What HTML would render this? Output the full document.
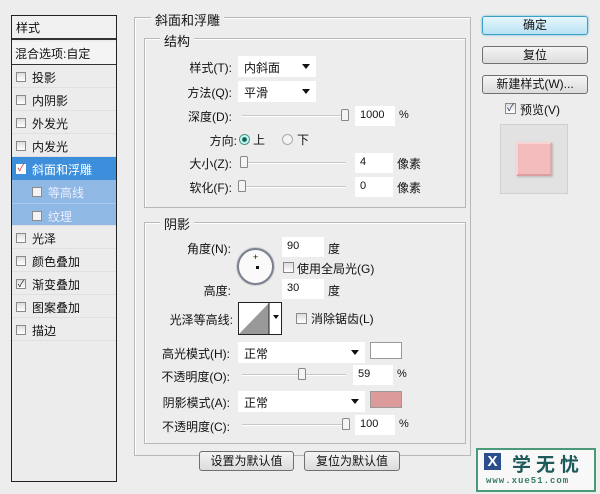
<!DOCTYPE html>
<html><head><meta charset="utf-8"><style>
*{box-sizing:border-box;margin:0;padding:0}
body{width:600px;height:494px;background:#ededed;font-family:"Liberation Sans","Noto Sans CJK SC",sans-serif;font-size:12px;color:#111;position:relative;overflow:hidden}
.a{position:absolute;white-space:nowrap}
.cb{position:absolute;width:10px;height:10px;border:1px solid #8a8a8a;background:linear-gradient(#ddd,#fff)}
.row{position:absolute;left:12px;width:104px;height:23px;border-bottom:1px solid #e0e0e0}
.row span{position:absolute;left:20px;top:4px}
.row .cb{left:4px;top:7px}
.gb{position:absolute;border:1px solid #b8b8b8;box-shadow:1px 1px 0 #fff inset}
.gt{position:absolute;background:#ededed;padding:0 4px}
.lab{position:absolute;text-align:right;white-space:nowrap}
.inp{position:absolute;background:#fff;height:20px;padding:3px 0 0 5px;font-size:11px}
.dd{position:absolute;background:#fff;height:21px;padding:3px 0 0 6px}
.dd:after{content:"";position:absolute;right:6px;top:8px;border:4px solid transparent;border-top:5px solid #111}
.sl{position:absolute;height:2px;background:#c8c8c8;border-bottom:1px solid #fff}
.th{position:absolute;width:8px;height:12px;border:1px solid #888;border-radius:2px 2px 1px 1px;background:#f4f4f4}
.btn{position:absolute;border:1px solid #707070;border-radius:3px;background:linear-gradient(#f4f4f4,#dcdcdc);text-align:center;font-size:12px;line-height:16px}
</style></head><body>
<!-- left list -->
<div class="a" style="left:11px;top:15px;width:106px;height:467px;border:1px solid #222;background:#ececec"></div>
<div class="a" style="left:12px;top:16px;width:104px;height:24px;background:#f0f0f0;border-bottom:2px solid #333;padding:3px 4px">样式</div>
<div class="a" style="left:12px;top:42px;width:104px;height:23px;background:#f4f4f4;border-bottom:1px solid #333;padding:3px 3px">混合选项:自定</div>
<div class="row" style="top:65px"><div class="cb"></div><span>投影</span></div>
<div class="row" style="top:88px"><div class="cb"></div><span>内阴影</span></div>
<div class="row" style="top:111px"><div class="cb"></div><span>外发光</span></div>
<div class="row" style="top:134px"><div class="cb"></div><span>内发光</span></div>
<div class="row" style="top:157px;background:#3d8fdc;color:#fff;border:none"><div class="cb" style="border-color:#fff;background:#fff;color:#c33;font-size:10px;line-height:8px;text-align:center">✓</div><span>斜面和浮雕</span></div>
<div class="row" style="top:180px;background:#8fb8e4;color:#eef;border:none"><div class="cb" style="left:20px;background:#f4f4f4"></div><span style="left:36px">等高线</span></div>
<div class="row" style="top:203px;background:#8fb8e4;color:#eef;border-top:1px solid #aac8ec"><div class="cb" style="left:20px;background:#f4f4f4"></div><span style="left:36px">纹理</span></div>
<div class="row" style="top:226px"><div class="cb"></div><span>光泽</span></div>
<div class="row" style="top:249px"><div class="cb"></div><span>颜色叠加</span></div>
<div class="row" style="top:272px"><div class="cb" style="font-size:9px;line-height:8px;text-align:center">✓</div><span>渐变叠加</span></div>
<div class="row" style="top:295px"><div class="cb"></div><span>图案叠加</span></div>
<div class="row" style="top:318px"><div class="cb"></div><span>描边</span></div>

<!-- main group -->
<div class="gb" style="left:134px;top:17px;width:337px;height:439px"></div>
<div class="gt" style="left:151px;top:10px;font-size:13px">斜面和浮雕</div>
<div class="gb" style="left:144px;top:38px;width:322px;height:170px"></div>
<div class="gt" style="left:160px;top:31px;font-size:13px">结构</div>
<div class="lab" style="right:368px;top:59px">样式(T):</div>
<div class="dd" style="left:238px;top:56px;width:78px">内斜面</div>
<div class="lab" style="right:368px;top:84px">方法(Q):</div>
<div class="dd" style="left:238px;top:81px;width:78px">平滑</div>
<div class="lab" style="right:368px;top:108px">深度(D):</div>
<div class="sl" style="left:242px;top:115px;width:104px"></div><div class="th" style="left:341px;top:109px"></div>
<div class="inp" style="left:355px;top:106px;width:40px">1000</div><div class="a" style="left:399px;top:109px;font-size:11px">%</div>
<div class="lab" style="right:363px;top:132px">方向:</div>
<div class="a" style="left:239px;top:134px;width:11px;height:11px;border-radius:50%;border:1px solid #5a8a8a;background:radial-gradient(#1d5a5a 30%,#bfe 45%)"></div>
<div class="a" style="left:253px;top:131px">上</div>
<div class="a" style="left:282px;top:134px;width:11px;height:11px;border-radius:50%;border:1px solid #aaa;background:#f4f4f4"></div>
<div class="a" style="left:297px;top:131px">下</div>
<div class="lab" style="right:368px;top:155px">大小(Z):</div>
<div class="sl" style="left:242px;top:162px;width:104px"></div><div class="th" style="left:240px;top:156px"></div>
<div class="inp" style="left:355px;top:153px;width:38px">4</div><div class="a" style="left:397px;top:155px">像素</div>
<div class="lab" style="right:368px;top:179px">软化(F):</div>
<div class="sl" style="left:242px;top:186px;width:104px"></div><div class="th" style="left:238px;top:180px"></div>
<div class="inp" style="left:355px;top:177px;width:38px">0</div><div class="a" style="left:397px;top:179px">像素</div>

<div class="gb" style="left:144px;top:222px;width:322px;height:222px"></div>
<div class="gt" style="left:160px;top:214px;font-size:13px">阴影</div>
<div class="lab" style="right:369px;top:240px">角度(N):</div>
<div class="inp" style="left:282px;top:237px;width:42px">90</div><div class="a" style="left:328px;top:240px">度</div>
<div class="a" style="left:237px;top:248px;width:37px;height:37px;border-radius:50%;border:2px solid #7a8090;background:#fafafa;box-shadow:0 0 0 1px #ccc"></div>
<div class="a" style="left:253px;top:252px;font-size:9px">+</div>
<div class="a" style="left:256px;top:266px;width:3px;height:3px;background:#111"></div>
<div class="cb" style="left:283px;top:262px;width:11px;height:11px"></div><div class="a" style="left:297px;top:260px">使用全局光(G)</div>
<div class="lab" style="right:369px;top:282px">高度:</div>
<div class="inp" style="left:282px;top:279px;width:42px">30</div><div class="a" style="left:328px;top:282px">度</div>
<div class="lab" style="right:367px;top:311px">光泽等高线:</div>
<div class="a" style="left:238px;top:302px;width:44px;height:33px;border:1px solid #222;background:#fff">
<svg width="42" height="31" style="position:absolute;left:0;top:0"><polygon points="0,31 30,0 30,31" fill="#999"/><line x1="30" y1="0" x2="30" y2="31" stroke="#222"/></svg>
<div class="a" style="left:34px;top:12px;border:3px solid transparent;border-top:4px solid #111"></div></div>
<div class="cb" style="left:296px;top:313px;width:11px;height:11px"></div><div class="a" style="left:311px;top:310px">消除锯齿(L)</div>
<div class="lab" style="right:370px;top:345px">高光模式(H):</div>
<div class="dd" style="left:238px;top:342px;width:127px">正常</div>
<div class="a" style="left:370px;top:342px;width:32px;height:17px;border:1px solid #999;background:#fff"></div>
<div class="lab" style="right:370px;top:368px">不透明度(O):</div>
<div class="sl" style="left:242px;top:374px;width:104px"></div><div class="th" style="left:298px;top:368px"></div>
<div class="inp" style="left:353px;top:365px;width:40px">59</div><div class="a" style="left:397px;top:368px;font-size:11px">%</div>
<div class="lab" style="right:370px;top:394px">阴影模式(A):</div>
<div class="dd" style="left:238px;top:391px;width:127px">正常</div>
<div class="a" style="left:370px;top:391px;width:32px;height:17px;border:1px solid #999;background:#dc9a9a"></div>
<div class="lab" style="right:370px;top:418px">不透明度(C):</div>
<div class="sl" style="left:242px;top:424px;width:104px"></div><div class="th" style="left:342px;top:418px"></div>
<div class="inp" style="left:355px;top:415px;width:40px">100</div><div class="a" style="left:399px;top:418px;font-size:11px">%</div>
<div class="btn" style="left:199px;top:451px;width:95px;height:20px;line-height:18px">设置为默认值</div>
<div class="btn" style="left:304px;top:451px;width:96px;height:20px;line-height:18px">复位为默认值</div>

<!-- right -->
<div class="btn" style="left:482px;top:16px;width:106px;height:19px;border-color:#3d9ec8;background:linear-gradient(#e6f6fd,#b9e2f4);box-shadow:0 0 2px #5bc">确定</div>
<div class="btn" style="left:482px;top:46px;width:106px;height:18px">复位</div>
<div class="btn" style="left:482px;top:75px;width:106px;height:19px">新建样式(W)...</div>
<div class="cb" style="left:505px;top:103px;width:11px;height:11px;font-size:10px;line-height:9px;text-align:center;color:#235">✓</div>
<div class="a" style="left:520px;top:101px">预览(V)</div>
<div class="a" style="left:500px;top:124px;width:68px;height:70px;background:#e2e2e2;border:1px solid #d0d0d0"></div>
<div class="a" style="left:516px;top:142px;width:36px;height:34px;background:#f2bcbc;border:2px solid #f8d4d4;border-right-color:#e4a8a8;border-bottom-color:#dc9e9e;box-shadow:1px 1px 2px #bbb"></div>

<!-- logo -->
<div class="a" style="left:476px;top:448px;width:120px;height:44px;border:2px solid #4a9a7a;background:#f8f8f8"></div>
<div class="a" style="left:484px;top:453px;width:17px;height:17px;background:#2b4f8c;color:#fff;font-size:15px;line-height:17px;text-align:center;font-weight:bold">X</div>
<div class="a" style="left:512px;top:450px;font-size:19px;font-weight:bold;color:#1f5a5a;letter-spacing:5px">学无忧</div>
<div class="a" style="left:486px;top:476px;font-size:9px;font-weight:bold;color:#3a7a6a;letter-spacing:1px;font-family:'Liberation Mono',monospace">www.xue51.com</div>
</body></html>
